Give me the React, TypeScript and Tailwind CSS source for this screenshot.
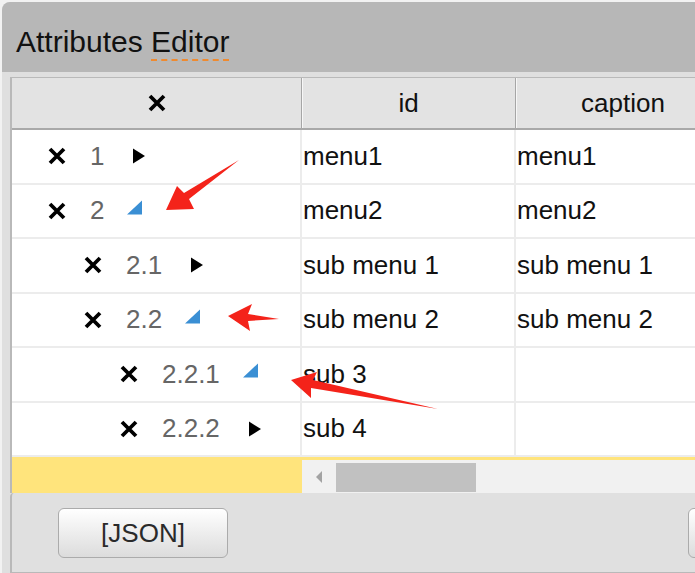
import React from "react";

interface Row {
  level: number;
  num: string;
  open: boolean;
  id: string;
  caption: string;
}

const rows: Row[] = [
  { level: 0, num: "1", open: false, id: "menu1", caption: "menu1" },
  { level: 0, num: "2", open: true, id: "menu2", caption: "menu2" },
  { level: 1, num: "2.1", open: false, id: "sub menu 1", caption: "sub menu 1" },
  { level: 1, num: "2.2", open: true, id: "sub menu 2", caption: "sub menu 2" },
  { level: 2, num: "2.2.1", open: true, id: "sub 3", caption: "" },
  { level: 2, num: "2.2.2", open: false, id: "sub 4", caption: "" },
];

const indent = ["pl-[35px]", "pl-[71px]", "pl-[107px]"];

function Cross() {
  return (
    <svg width="20" height="20" viewBox="0 0 20 20" className="shrink-0">
      <path d="M3 3 L17 17 M17 3 L3 17" stroke="#000" strokeWidth="3.8" fill="none" />
    </svg>
  );
}

function Toggle({ open }: { open: boolean }) {
  return (
    <svg width="18" height="24" viewBox="0 0 18 24" className="shrink-0">
      {open ? (
        <polygon points="0,15.5 15,15.5 15,1.5" fill="#3a8fd4" />
      ) : (
        <polygon points="6,4.5 18,12 6,19.5" fill="#000" />
      )}
    </svg>
  );
}

export default function App() {
  return (
    <div className="relative w-[695px] h-[573px] overflow-hidden bg-[#f2f2f2] font-['Liberation_Sans',Arial,sans-serif]">
      <div className="ml-[2px] mt-[2px] w-[760px] h-[571px] bg-[#dfdfdf] rounded-tl-[8px] flex flex-col">
        {/* title */}
        <div className="h-[70px] shrink-0 bg-[#b7b7b7] rounded-tl-[8px] pl-[14px] pt-[9px] flex items-center text-[30px] text-[#111]">
          <span>
            Attributes{" "}
            <span className="underline decoration-dashed decoration-2 decoration-[#ef8a2f] underline-offset-[7px]">Editor</span>
          </span>
        </div>

        {/* grid */}
        <div className="mt-[5px] ml-[8px] border-l-2 border-t border-[#b9b9b9] bg-white flex flex-col text-[26px] text-[#111]">
          <div className="flex h-[52px] bg-[#e3e3e3] border-b-2 border-[#a9a9a9]">
            <div className="w-[290px] shrink-0 flex items-center justify-center border-r border-[#a6a6a6]">
              <Cross />
            </div>
            <div className="w-[214px] shrink-0 flex items-center justify-center border-r border-[#a6a6a6] shadow-[inset_1px_0_0_#f7f7f7]">
              id
            </div>
            <div className="w-[214px] shrink-0 flex items-center justify-center shadow-[inset_1px_0_0_#f7f7f7]">
              caption
            </div>
          </div>

          {rows.map((r) => (
            <div key={r.num} className="flex h-[54.5px] border-b-2 border-[#ececec]">
              <div className={`w-[290px] shrink-0 flex items-center border-r-2 border-[#ececec] ${indent[r.level]}`}>
                <Cross />
                <span className="ml-[23px] text-[#666]">{r.num}</span>
                <span className="ml-[23px]">
                  <Toggle open={r.open} />
                </span>
              </div>
              <div className="w-[214px] shrink-0 flex items-center pl-[1px] border-r-2 border-[#ececec] whitespace-nowrap">
                {r.id}
              </div>
              <div className="w-[214px] shrink-0 flex items-center pl-[1px] whitespace-nowrap">{r.caption}</div>
            </div>
          ))}

          {/* frozen column footer + horizontal scrollbar */}
          <div className="flex h-[36px] bg-[#ffe47c]">
            <div className="w-[290px] shrink-0" />
            <div className="flex-1 mt-[3px] bg-[#f1f1f1] flex items-stretch">
              <div className="w-[34px] flex items-center justify-center">
                <svg width="6" height="12" viewBox="0 0 6 12">
                  <polygon points="6,0 6,12 0,6" fill="#a3a3a3" />
                </svg>
              </div>
              <div className="w-[140px] mt-[3px] mb-[1px] bg-[#c1c1c1]" />
            </div>
          </div>
        </div>

        {/* footer */}
        <div className="ml-[8px] flex-1 border-l-2 border-b border-[#b9b9b9] bg-[#e0e0e0] rounded-tl-[4px] pt-[15px] pl-[46px] flex items-start">
          <button className="shrink-0 w-[170px] h-[50px] rounded-[6px] border border-[#ababab] bg-gradient-to-b from-white to-[#dcdcdc] text-[26px] text-[#2a2a2a]">
            [JSON]
          </button>
          <button className="shrink-0 ml-[460px] w-[100px] h-[50px] rounded-[6px] border border-[#ababab] bg-gradient-to-b from-white to-[#dcdcdc]" />
        </div>
      </div>

      {/* annotation arrows */}
      <svg className="absolute inset-0 pointer-events-none" width="695" height="573" viewBox="0 0 695 573">
        <polygon points="166,210 177,186 184,193 239,160 189,199 194,209" fill="#f4231a" />
        <polygon points="228,316 252,304 248,314 279,319 248,321 250,331" fill="#f4231a" />
        <polygon points="291,380 317,372 313,380 438,409 311,388 311,398" fill="#f4231a" />
      </svg>
    </div>
  );
}
